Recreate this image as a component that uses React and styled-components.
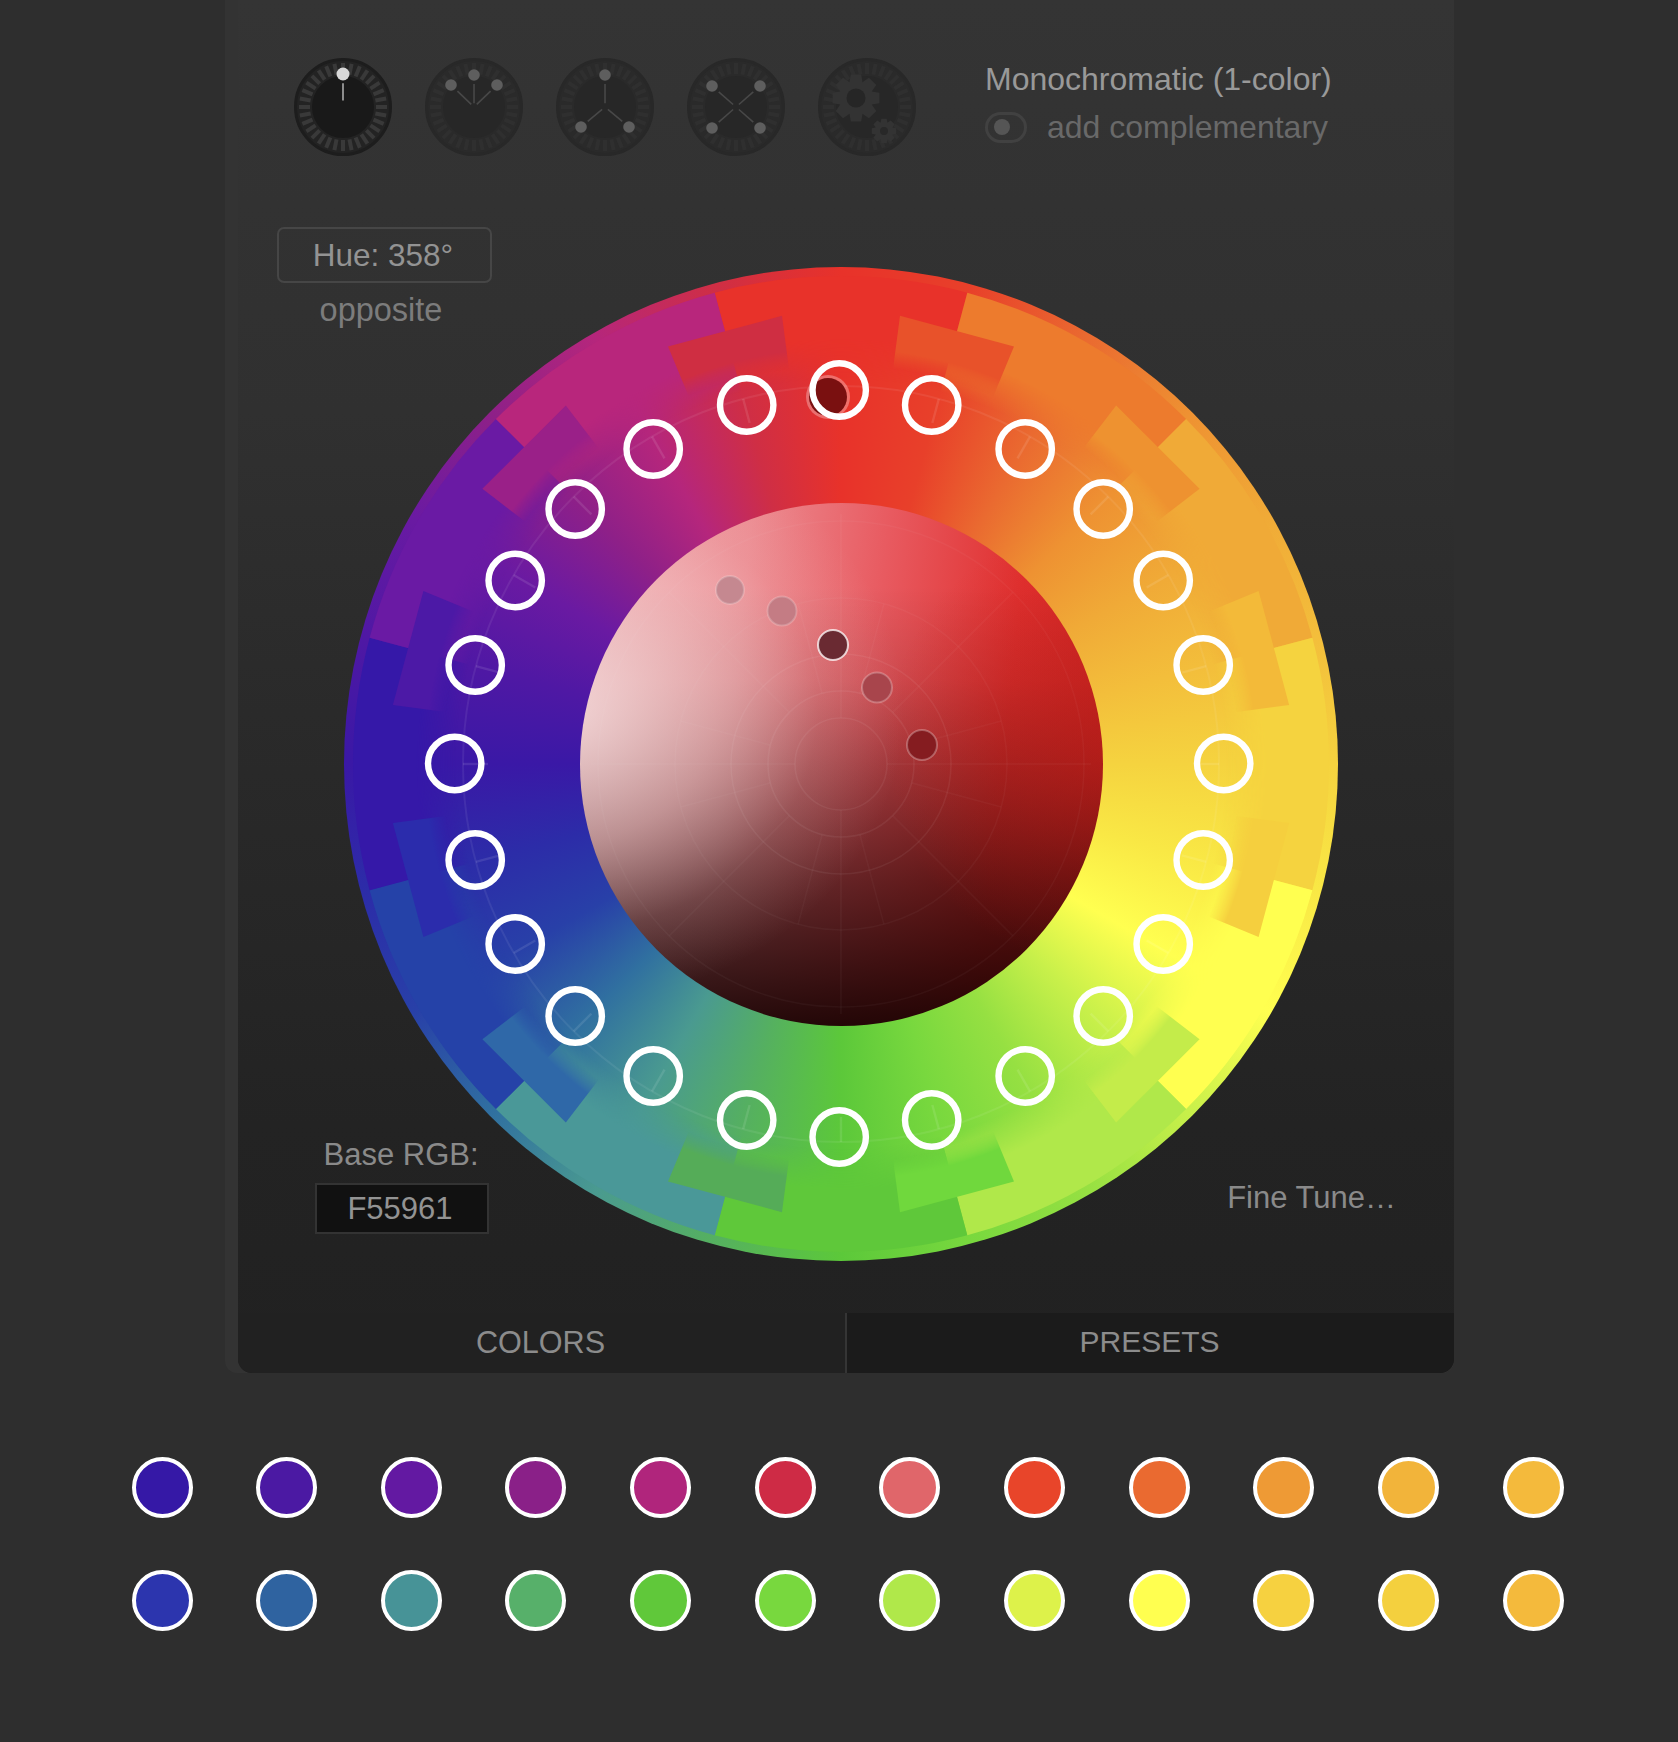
import React from "react";
import styled, { createGlobalStyle } from "styled-components";

const GlobalStyle = createGlobalStyle`
  html, body { margin: 0; padding: 0; background: #2e2e2e; }
  body { font-family: "Liberation Sans", Arial, sans-serif; }
`;

const Page = styled.div`width: 1678px; height: 1742px; overflow: hidden; background: #2e2e2e;`;
const Panel = styled.div`margin-left: 225px; width: 1229px; height: 1373px; box-sizing: border-box; background: #333;
  border-radius: 0 0 12px 12px; padding-left: 13px;`;
const Inner = styled.div`height: 100%; display: flex; flex-direction: column; border-radius: 0 0 14px 14px; overflow: hidden;
  background: linear-gradient(180deg, #343434 0%, #303030 30%, #2a2a2a 52%, #232323 82%, #212121 100%);`;
const Header = styled.div`height: 200px; flex: none; box-sizing: border-box; display: flex; align-items: flex-start; padding: 57px 0 0 55px;`;
const Dials = styled.div`display: flex; gap: 31px;`;
const DialIcon = styled.svg`display: block; width: 100px; height: 100px; filter: blur(0.7px);`;
const ModeInfo = styled.div`margin: 4px 0 0 68px; display: flex; flex-direction: column; gap: 12px;`;
const ModeTitle = styled.div`font-size: 32px; line-height: 36px; color: #999;`;
const ToggleRow = styled.div`display: flex; align-items: center; gap: 20px;`;
const Toggle = styled.div`width: 42px; height: 31px; box-sizing: border-box; border: 3px solid #414141; border-radius: 16px; display: flex; align-items: center; padding-left: 6px;`;
const Knob = styled.div`width: 16px; height: 16px; border-radius: 50%; background: #555;`;
const ToggleLabel = styled.div`font-size: 32px; line-height: 36px; color: #696969;`;
const Stage = styled.div`flex: 1; display: grid; grid-template: 1fr / 1fr; min-height: 0;`;
const HueBlock = styled.div`grid-area: 1 / 1; justify-self: start; align-self: start; margin: 27px 0 0 39px; width: 215px; display: flex; flex-direction: column; align-items: center; gap: 9px; position: relative; z-index: 1;`;
const HueBox = styled.div`width: 100%; height: 56px; box-sizing: border-box; border: 2px solid #464646; border-radius: 7px; display: flex; align-items: center; justify-content: center; padding-right: 3px; font-size: 31.5px; color: #939393;`;
const HueCaption = styled.div`font-size: 32.5px; line-height: 36px; color: #7c7c7c; margin-right: 7px;`;
const RgbBlock = styled.div`grid-area: 1 / 1; justify-self: start; align-self: end; margin: 0 0 79px 77px; width: 174px; display: flex; flex-direction: column; align-items: center; gap: 10px; position: relative; z-index: 1;`;
const RgbLabel = styled.div`font-size: 31px; line-height: 36px; color: #8a8a8a; margin-right: 2px;`;
const RgbField = styled.div`width: 100%; height: 51px; box-sizing: border-box; background: #111; border: 2px solid #333; display: flex; align-items: center; justify-content: center; padding-right: 4px; font-size: 31px; color: #939393;`;
const FineTune = styled.div`grid-area: 1 / 1; justify-self: end; align-self: end; margin: 0 58px 97px 0; font-size: 31px; line-height: 36px; color: #8a8a8a; position: relative; z-index: 1;`;
const Wheel = styled.div`grid-area: 1 / 1; justify-self: start; align-self: start; margin: 67px 0 0 106px; width: 994px; height: 994px; position: relative;`;
const HueRing = styled.div`position: absolute; inset: 0; border-radius: 50%;
  background: conic-gradient(from 0deg, #e8322a 0deg, #e8402a 15deg, #ea6a30 30deg, #ee9232 45deg, #f0aa37 60deg, #f3be3b 75deg, #f5d33f 90deg,
    #f9e845 105deg, #ffff50 120deg, #c8f04a 135deg, #96e042 150deg, #78d83e 165deg, #5cc83a 180deg, #55b060 195deg, #4a9a90 210deg, #3070a0 225deg,
    #2840a8 240deg, #2c2ca8 255deg, #3a18a6 270deg, #4f18a4 285deg, #6a1aa2 300deg, #8e2088 315deg, #b5267c 330deg, #cf2e45 345deg, #e8322a 360deg);`;
const Disc = styled.div`position: absolute; left: 235.5px; top: 235.5px; width: 523px; height: 523px; border-radius: 50%;
  background:
    radial-gradient(ellipse 66% 56% at -4% 40%, rgba(250,226,226,.85) 0%, rgba(244,206,206,.52) 45%, rgba(240,200,200,.14) 75%, rgba(240,200,200,0) 100%),
    radial-gradient(ellipse 46% 44% at 104% 46%, rgba(205,32,26,.55) 0%, rgba(205,32,26,.2) 60%, rgba(205,32,26,0) 100%),
    linear-gradient(180deg, rgba(20,0,0,0) 16%, rgba(20,0,0,.12) 34%, rgba(20,0,0,.36) 52%, rgba(20,0,0,.62) 72%, rgba(20,0,0,.93) 100%),
    linear-gradient(96deg, #eeaab0 0%, #ec8a90 30%, #e85a60 54%, #e0302f 78%, #cf2321 100%);`;
const WheelArt = styled.svg`position: absolute; inset: 0; width: 994px; height: 994px; overflow: visible;`;
const Tabs = styled.div`height: 60px; flex: none; display: flex;`;
const Tab = styled.div`flex: ${({ $wide }) => ($wide ? "0 0 609px" : "1")}; box-sizing: border-box; background: ${({ $active }) => ($active ? "#212121" : "#1b1b1b")}; display: flex; align-items: center; justify-content: center;
  padding: 0 2px 2px 0; font-size: ${({ $active }) => ($active ? "30.6px" : "30px")}; color: #8c8c8c; ${({ $active }) => ($active ? "border-right: 2px solid #353535;" : "")}`;
const Swatches = styled.div`margin: 84px 0 0 131.5px; display: grid; grid-template-columns: repeat(12, 61px); column-gap: 63.65px; row-gap: 52px;`;
const Swatch = styled.div`width: 61px; height: 61px; box-sizing: border-box; border-radius: 50%; border: 4px solid #fff; background: ${({ $color }) => $color};`;

const C = 497;
const polar = (r, deg, cx = C, cy = C) => {
  const a = (deg * Math.PI) / 180;
  return [cx + r * Math.sin(a), cy - r * Math.cos(a)];
};
const sector = (r1, r2, a1, a2) => {
  const [x1, y1] = polar(r2, a1);
  const [x2, y2] = polar(r2, a2);
  const [x3, y3] = polar(r1, a2);
  const [x4, y4] = polar(r1, a1);
  return `M${x1} ${y1}A${r2} ${r2} 0 0 1 ${x2} ${y2}L${x3} ${y3}A${r1} ${r1} 0 0 0 ${x4} ${y4}Z`;
};
// the inner blocks have straight edges
const slab = (r1, r2, a1, a2) => [polar(r2, a1), polar(r2, a2), polar(r1, a2), polar(r1, a1)].map((p) => p.join(",")).join(" ");

const bigBlocks = ["#e8322a", "#ed7b2d", "#f0aa37", "#f5d33f", "#ffff50", "#b0e84a", "#5fc83a", "#4a9898", "#2542a8", "#3518a8", "#6a1aa4", "#b8267c"];
const smallBlocks = ["#e8522a", "#ee9230", "#f3ba39", "#f5cf3e", "#c4ec4a", "#70d83d", "#55ac58", "#2f68a8", "#2b2cac", "#4c19a6", "#9a2088", "#cf2e42"];

// markers, not a true circle in the source so taken by hand
const half = [[92.5, -358.5], [186, -314.5], [264, -254.5], [324, -183], [364, -98.5], [384.5, 0], [364, 96.5], [324, 180.5], [264, 252.5], [186, 312.5], [92.5, 356.5]];
const markers = [[0, -373.5], [0, 373.5], ...half, ...half.map(([x, y]) => [-x, y])].map(([x, y]) => [495.2 + x, 496.5 + y]);

const shades = [
  { x: 730, y: 590, r: 14, fill: "#c58890", line: 0.2 },
  { x: 782, y: 611, r: 14.5, fill: "#c47c84", line: 0.2 },
  { x: 877, y: 687.5, r: 15, fill: "#a8454c", line: 0.25 },
  { x: 922, y: 745, r: 15, fill: "#851c20", line: 0.28 },
  { x: 833, y: 645, r: 15, fill: "#6a2a32", line: 0.75 },
];

const gear = (cx, cy, outer, inner, teeth) => {
  const pts = [];
  const step = 360 / teeth;
  for (let i = 0; i < teeth; i++) {
    const a = i * step;
    [[inner, -0.5], [outer, -0.28], [outer, 0.28], [inner, 0.5]].forEach(([r, k]) => {
      const [x, y] = polar(r, a + k * step, cx, cy);
      pts.push(`${x.toFixed(1)},${y.toFixed(1)}`);
    });
  }
  return pts.join(" ");
};

const dialPins = {
  mono: [[0, -33]],
  analog: [[-23, -22], [0, -32], [23, -22]],
  triad: [[0, -32], [-24, 20], [24, 20]],
  tetrad: [[-24, -21], [24, -21], [-24, 21], [24, 21]],
};

function Dial({ type, active }) {
  const ticks = Array.from({ length: 32 }, (_, i) => i * 11.25);
  const pins = dialPins[type];
  return (
    <DialIcon viewBox="0 0 100 100">
      <circle cx="50" cy="50" r="47.5" fill={active ? "#232323" : "#2a2a2a"} stroke={active ? "#1d1d1d" : "#282828"} strokeWidth="3" />
      {ticks.map((a) => {
        const [x1, y1] = polar(33, a, 50, 50);
        const [x2, y2] = polar(44, a, 50, 50);
        return <line key={a} x1={x1} y1={y1} x2={x2} y2={y2} stroke={active ? "#393939" : "#2f2f2f"} strokeWidth="4" />;
      })}
      <circle cx="50" cy="50" r="31" fill={active ? "#191919" : "#272727"} />
      {pins &&
        pins.map(([x, y]) => (
          <g key={`${x}${y}`}>
            <line x1={50 + x * 0.72} y1={50 + y * 0.72} x2={50 + x * (active ? 0.2 : 0.12)} y2={50 + y * (active ? 0.2 : 0.12)} stroke={active ? "#aaa" : "#484848"} strokeWidth="1.6" />
            <circle cx={50 + x} cy={50 + y} r={active ? 6.5 : 5.8} fill={active ? "#d8d8d8" : "#5e5e5e"} />
          </g>
        ))}
      {type === "gears" && (
        <g>
          <polygon points={gear(39, 41, 24, 17, 8)} fill="#333" />
          <circle cx="39" cy="41" r="9.5" fill="#262626" />
          <polygon points={gear(67, 74, 12.5, 9, 8)} fill="#333" />
          <circle cx="67" cy="74" r="4" fill="#282828" />
        </g>
      )}
    </DialIcon>
  );
}

function WheelDrawing() {
  return (
    <WheelArt viewBox="0 0 994 994">
      <defs>
        <radialGradient id="fade" gradientUnits="userSpaceOnUse" cx={C} cy={C} r={C}>
          <stop offset={385 / C} stopColor="#fff" stopOpacity="0" />
          <stop offset={425 / C} stopColor="#fff" stopOpacity="1" />
        </radialGradient>
        <mask id="fadeMask" maskUnits="userSpaceOnUse" x="0" y="0" width="994" height="994">
          <rect width="994" height="994" fill="url(#fade)" />
        </mask>
        <radialGradient id="fadeSoft" gradientUnits="userSpaceOnUse" cx={C} cy={C} r={C}>
          <stop offset={398 / C} stopColor="#fff" stopOpacity="0" />
          <stop offset={416 / C} stopColor="#fff" stopOpacity="1" />
        </radialGradient>
        <mask id="slabMask" maskUnits="userSpaceOnUse" x="0" y="0" width="994" height="994">
          <rect width="994" height="994" fill="url(#fadeSoft)" />
        </mask>
      </defs>
      <g mask="url(#fadeMask)">
        {bigBlocks.map((c, i) => (
          <path key={c} d={sector(380, 488, i * 30 - 15, i * 30 + 15)} fill={c} />
        ))}
      </g>
      <g mask="url(#slabMask)">
        {smallBlocks.map((c, i) => (
          <polygon key={c} points={slab(395, 452, i * 30 + 7.5, i * 30 + 22.5)} fill={c} />
        ))}
      </g>

      <circle cx={C} cy={C} r="378" fill="none" stroke="#fff" strokeOpacity=".07" strokeWidth="2" />
      {Array.from({ length: 24 }, (_, i) => {
        const [x1, y1] = polar(353, i * 15);
        const [x2, y2] = polar(378, i * 15);
        return <line key={i} x1={x1} y1={y1} x2={x2} y2={y2} stroke="#fff" strokeOpacity=".1" strokeWidth="2.4" />;
      })}

      {/* polar grid on the shade disc */}
      {[46, 73, 110, 166, 243].map((r) => (
        <circle key={r} cx={C} cy={C} r={r} fill="none" stroke="#fff" strokeOpacity={r > 120 ? 0.035 : 0.06} strokeWidth="1.6" />
      ))}
      {[0, 90, 180, 270].map((a) => {
        const [x1, y1] = polar(46, a);
        const [x2, y2] = polar(250, a);
        return <line key={a} x1={x1} y1={y1} x2={x2} y2={y2} stroke="#fff" strokeOpacity=".04" strokeWidth="1.6" />;
      })}
      {[15, 45, 75, 105, 135, 165, 195, 225, 255, 285, 315, 345].map((a) => {
        const [x1, y1] = polar(73, a);
        const [x2, y2] = polar(a % 90 === 45 ? 243 : 166, a);
        return <line key={a} x1={x1} y1={y1} x2={x2} y2={y2} stroke="#fff" strokeOpacity=".03" strokeWidth="1.6" />;
      })}

      {shades.map((s) => (
        <circle key={s.x} cx={s.x - 344} cy={s.y - 267} r={s.r} fill={s.fill} stroke="#fff" strokeOpacity={s.line} strokeWidth="2" />
      ))}

      <circle cx="484" cy="130" r="22" fill="#fff" fillOpacity=".3" />
      <circle cx="484" cy="130" r="19" fill="#7a1010" />
      {markers.map(([x, y]) => (
        <circle key={`${x}-${y}`} cx={x} cy={y} r="26.7" fill="none" stroke="#fff" strokeWidth="6.4" />
      ))}
    </WheelArt>
  );
}

const swatchColors = [
  "#3518a6", "#4b19a3", "#6319a2", "#8a2088", "#b0257c", "#ce2b45", "#e0666a", "#e8452a", "#ea6a30", "#ee9a35", "#f2b43a", "#f4ba3c",
  "#2c35ae", "#2f63a0", "#479397", "#57b06a", "#60c83a", "#78d83e", "#b0e84a", "#ddf24a", "#ffff50", "#f6d140", "#f4d03e", "#f4ba3c",
];

export default function App() {
  return (
    <Page>
      <GlobalStyle />
      <Panel>
        <Inner>
          <Header>
            <Dials>
              <Dial type="mono" active />
              <Dial type="analog" />
              <Dial type="triad" />
              <Dial type="tetrad" />
              <Dial type="gears" />
            </Dials>
            <ModeInfo>
              <ModeTitle>Monochromatic (1-color)</ModeTitle>
              <ToggleRow>
                <Toggle>
                  <Knob />
                </Toggle>
                <ToggleLabel>add complementary</ToggleLabel>
              </ToggleRow>
            </ModeInfo>
          </Header>
          <Stage>
            <Wheel>
              <HueRing />
              <Disc />
              <WheelDrawing />
            </Wheel>
            <HueBlock>
              <HueBox>Hue: 358°</HueBox>
              <HueCaption>opposite</HueCaption>
            </HueBlock>
            <RgbBlock>
              <RgbLabel>Base RGB:</RgbLabel>
              <RgbField>F55961</RgbField>
            </RgbBlock>
            <FineTune>Fine Tune…</FineTune>
          </Stage>
          <Tabs>
            <Tab $active $wide>COLORS</Tab>
            <Tab>PRESETS</Tab>
          </Tabs>
        </Inner>
      </Panel>
      <Swatches>
        {swatchColors.map((c, i) => (
          <Swatch key={i} $color={c} />
        ))}
      </Swatches>
    </Page>
  );
}
